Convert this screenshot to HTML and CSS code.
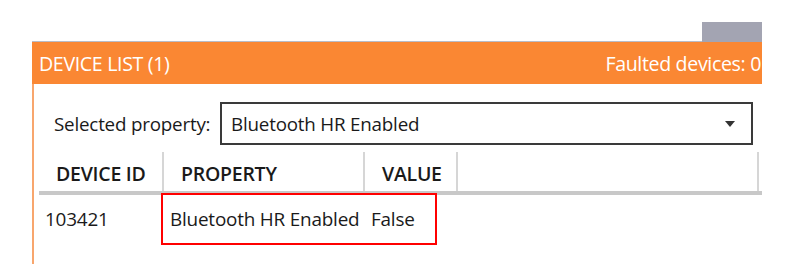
FILE: index.html
```html
<!DOCTYPE html>
<html lang="en">
<head>
    <meta charset="UTF-8">
    <meta name="viewport" content="width=device-width, initial-scale=1.0">
    <title>Device list</title>
    <link rel="stylesheet" href="styles.css">
</head>
<body>

<div class="panel">
    <!-- tab strip above the header -->
    <div class="tabstrip">
        <div class="tabline"></div>
        <div class="tab"></div>
    </div>

    <div class="panel-header">
        <span>DEVICE LIST (1)</span>
        <span>Faulted devices: 0</span>
    </div>

    <div class="panel-body">
        <div class="prop-row">
            <span class="prop-label">Selected property:</span>
            <div class="dropdown">
                <span>Bluetooth HR Enabled</span>
                <svg class="caret" width="10" height="6" viewBox="0 0 10 6"><path d="M0 0 L10 0 L5 6 Z" fill="#333"/></svg>
            </div>
        </div>

        <div class="grid">
            <div class="grid-head">
                <div class="cell col-id">DEVICE ID</div>
                <div class="cell col-prop">PROPERTY</div>
                <div class="cell col-val">VALUE</div>
                <div class="cell col-rest"></div>
            </div>
            <div class="grid-row">
                <div class="cell col-id">103421</div>
                <div class="cell col-prop">Bluetooth HR Enabled</div>
                <div class="cell col-val">False</div>
            </div>
            <!-- highlight box drawn over the row -->
            <div class="mark"></div>
        </div>
    </div>
</div>

</body>
</html>
```

FILE: styles.css
```css
body { margin: 0; background: #fff; font-family: "Open Sans", "Noto Sans", sans-serif; color: #1a1a1a; }
.panel { margin: 22px 0 0 32px; width: 730px; }
.tabstrip { display: flex; height: 20px; }
.tabline { flex: 1; border-bottom: 1px solid #b9bcc7; }
.tab { width: 60px; background: #a3a4b2; }
.panel-header { height: 42px; background: #fa8733; color: #fff; display: flex; justify-content: space-between; align-items: center; padding: 0 1px 0 7px; font-size: 19.6px; letter-spacing: -0.35px; }
.panel-body { border-left: 2px solid #f8a66d; height: 180px; }
.prop-row { display: flex; align-items: center; padding: 18px 0 0 20px; font-size: 18.8px; letter-spacing: -0.2px; }
.prop-label { width: 166px; flex: none; }
.dropdown { box-sizing: border-box; flex: none; width: 533px; height: 43px; border: 2px solid #3a3a3a; display: flex; align-items: center; justify-content: space-between; padding: 0 16px 0 9px; }
.grid { position: relative; margin: 7px 0 0 5px; }
.grid-head { display: flex; height: 39px; border-bottom: 4px solid #c8c8c8; }
.grid-head .cell { border-right: 2px solid #d6d6d6; padding-left: 17px; font-size: 19.5px; font-weight: 600; letter-spacing: -0.25px; display: flex; align-items: center; padding-top: 3px; }
.grid-row { display: flex; height: 48px; align-items: center; font-size: 18.9px; letter-spacing: -0.2px; }
.grid-row .cell { padding-left: 6px; }
.col-id { width: 125px; }
.col-prop { width: 201px; }
.col-val { width: 93px; }
.col-rest { width: 301px; }
.cell { box-sizing: border-box; }
.mark { position: absolute; left: 122px; top: 41px; width: 276px; height: 52px; border: 2px solid #f00; box-sizing: border-box; }
```
